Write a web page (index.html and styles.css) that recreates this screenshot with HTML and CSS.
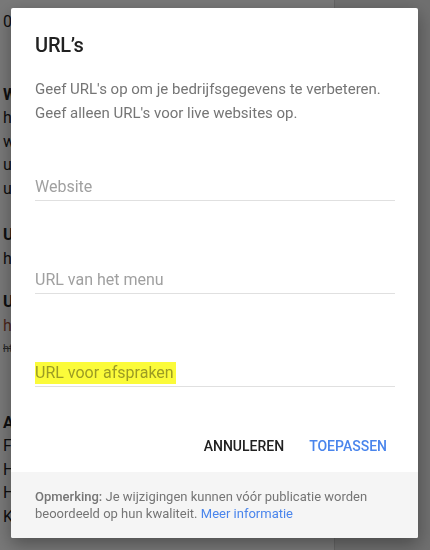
FILE: index.html
```html
<!DOCTYPE html>
<html lang="nl">
<head>
  <meta charset="UTF-8">
  <title>Info - URL's</title>
  <link rel="stylesheet" href="styles.css">
</head>
<body>

  <!-- Pagina achter de dialoog -->
  <div class="pagina">
    <div class="info-kolom">
      <p class="regel eerste">0 foto's</p>

      <div class="blok">
        <p class="regel kop">Website</p>
        <p class="regel">https://www.voorbeeld.nl</p>
        <p class="regel">www.voorbeeld.nl/menu</p>
        <p class="regel">url voor afspraken</p>
        <p class="regel">url voor bestellingen</p>
      </div>

      <div class="blok">
        <p class="regel kop">URL van het menu</p>
        <p class="regel">https://www.voorbeeld.nl/menu</p>
      </div>

      <div class="blok">
        <p class="regel kop">URL voor afspraken</p>
        <p class="regel rood">https://www.voorbeeld.nl/afspraken</p>
        <p class="regel oud">https://oud.voorbeeld.nl</p>
      </div>

      <div class="blok laatste">
        <p class="regel kop">Adres</p>
        <p class="regel">Fabrieksstraat 12</p>
        <p class="regel">Haarlem</p>
        <p class="regel">Hoofddorp</p>
        <p class="regel">Kennemerland</p>
      </div>
    </div>
    <div class="zijkant"></div>
  </div>

  <!-- Dialoog -->
  <div class="scherm">
    <div class="dialoog">
      <div class="dialoog-inhoud">
        <h2>URL’s</h2>
        <p class="uitleg">Geef URL's op om je bedrijfsgegevens te verbeteren. Geef alleen URL's voor live websites op.</p>

        <div class="veld">Website</div>
        <div class="veld">URL van het menu</div>
        <div class="veld"><span class="markering">URL voor afspraken</span></div>
      </div>

      <div class="knoppen">
        <button class="knop">Annuleren</button>
        <button class="knop blauw">Toepassen</button>
      </div>

      <div class="opmerking">
        <b>Opmerking:</b> Je wijzigingen kunnen vóór publicatie worden beoordeeld op hun kwaliteit. <a href="#">Meer informatie</a>
      </div>
    </div>
  </div>

</body>
</html>
```

FILE: styles.css
```css
body {
  margin: 0;
  font-family: Roboto, "Noto Sans", Arial, sans-serif;
  background: white;
}

/* Pagina achter de dialoog */
.pagina {
  display: flex;
  height: 550px;
  overflow: hidden;
}

.info-kolom {
  width: 335px;
  padding-left: 3px;
  border-right: 1px solid #d6d6d6;
  box-sizing: border-box;
  color: #202124;
}

.zijkant {
  flex: 1;
  background: #ebebeb;
}

.regel {
  margin: 0;
  font-size: 16px;
  line-height: 23.5px;
  white-space: nowrap;
}

.eerste {
  margin-top: 10px;
}

.blok {
  margin-top: 49px;
}

.blok:nth-of-type(2) {
  margin-top: 23px;
}

.blok:nth-of-type(3) {
  margin-top: 20px;
}

.blok.laatste {
  margin-top: 50px;
}

.kop {
  font-weight: bold;
}

.rood {
  color: #a0523c;
}

.oud {
  font-size: 11px;
  text-decoration: line-through;
  color: #555;
}

/* Dialoog */
.scherm {
  position: fixed;
  inset: 0;
  background: rgba(0, 0, 0, 0.53);
  padding: 8px 0 0 11px;
}

.dialoog {
  width: 407px;
  background: white;
  border-radius: 2px;
  box-shadow: 0 6px 18px rgba(0, 0, 0, 0.35);
  overflow: hidden;
}

.dialoog-inhoud {
  padding: 25px 24px 0 24px;
}

.dialoog h2 {
  margin: 0;
  font-size: 20px;
  line-height: 24px;
  font-weight: 500;
  color: #212121;
  letter-spacing: -0.2px;
}

.uitleg {
  margin: 20px 0 0;
  font-size: 15px;
  line-height: 24px;
  color: #757575;
  padding-right: 10px;
}

.veld {
  margin: 67px 0 0;
  width: 360px;
  font-size: 16px;
  line-height: 24px;
  color: #a0a0a0;
  padding-bottom: 1px;
  border-bottom: 1px solid #e0e0e0;
}

.veld:first-of-type {
  margin-top: 50px;
}

.markering {
  background: #fbfb3a;
  color: #9c9c24;
  padding: 1px 2px 2px 0;
}

.knoppen {
  display: flex;
  justify-content: flex-end;
  gap: 9px;
  padding: 41px 23px 8px 0;
}

.knop {
  border: none;
  background: none;
  font-family: Roboto, Arial, sans-serif;
  font-size: 14px;
  font-weight: 500;
  text-transform: uppercase;
  line-height: 36px;
  padding: 0 8px;
  color: #212121;
  cursor: pointer;
}

.knop.blauw {
  color: #4a85ec;
}

.opmerking {
  background: #f5f5f5;
  padding: 16px 24px;
  font-size: 13px;
  line-height: 17px;
  color: #757575;
}

.opmerking b {
  font-weight: 500;
}

.opmerking a {
  color: #4a85ec;
  text-decoration: none;
}
```
